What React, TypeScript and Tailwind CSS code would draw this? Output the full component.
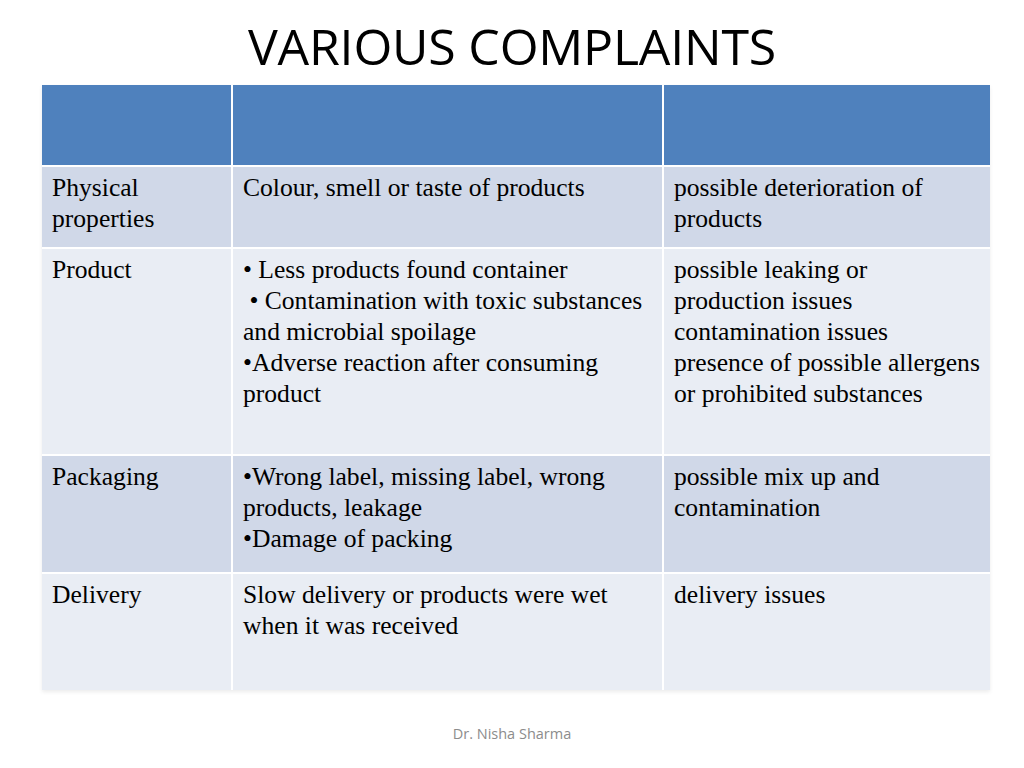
const ROWS = [
  {
    name: ["Physical", "properties"],
    issue: ["Colour, smell or taste of products"],
    cause: ["possible deterioration of", "products"],
    h: "h-[80px]",
    bg: "bg-[#d0d8e8]",
  },
  {
    name: ["Product"],
    issue: [
      "• Less products found container",
      " • Contamination with toxic substances",
      "and microbial spoilage",
      "•Adverse reaction after consuming",
      "product",
    ],
    cause: [
      "possible leaking or",
      "production issues",
      "contamination issues",
      "presence of possible allergens",
      "or prohibited substances",
    ],
    h: "h-[205px]",
    bg: "bg-[#e9edf4]",
  },
  {
    name: ["Packaging"],
    issue: ["•Wrong label, missing label, wrong", "products, leakage", "•Damage of packing"],
    cause: ["possible mix up and", "contamination"],
    h: "h-[116px]",
    bg: "bg-[#d0d8e8]",
  },
  {
    name: ["Delivery"],
    issue: ["Slow delivery or products were wet", "when it was received"],
    cause: ["delivery issues"],
    h: "h-[116px]",
    bg: "bg-[#e9edf4]",
  },
];

function Cell({ lines, className }: { lines: string[]; className: string }) {
  return (
    <div className={`pl-[10px] pr-[4px] pt-[5px] ${className}`}>
      {lines.map((l, i) => (
        <div key={i} className="whitespace-pre leading-[31px]">
          {l}
        </div>
      ))}
    </div>
  );
}

export default function App() {
  return (
    <div className="w-[1024px] h-[768px] bg-white relative overflow-hidden">
      <h1 className="text-center pt-[14px] h-[85px] text-[50px] leading-[64px] text-black font-['Open_Sans',sans-serif] tracking-[-0.2px]">
        VARIOUS COMPLAINTS
      </h1>

      <div className="ml-[42px] w-[948px] flex flex-col gap-[2px] font-['Liberation_Serif',serif] text-[25.6px] text-black shadow-[0_2px_4px_rgba(0,0,0,0.08)]">
        <div className="flex gap-[2px] h-[80px]">
          <div className="w-[189px] bg-[#4f81bd]" />
          <div className="w-[429px] bg-[#4f81bd]" />
          <div className="flex-1 bg-[#4f81bd]" />
        </div>
        {ROWS.map((r, i) => (
          <div key={i} className={`flex gap-[2px] ${r.h}`}>
            <Cell lines={r.name} className={`w-[189px] ${r.bg}`} />
            <Cell lines={r.issue} className={`w-[429px] ${r.bg}`} />
            <Cell lines={r.cause} className={`flex-1 ${r.bg}`} />
          </div>
        ))}
      </div>

      <div className="absolute left-0 right-0 top-[723px] text-center text-[14.5px] text-[#8c8c8c] font-['Open_Sans',sans-serif]">
        Dr. Nisha Sharma
      </div>
    </div>
  );
}
